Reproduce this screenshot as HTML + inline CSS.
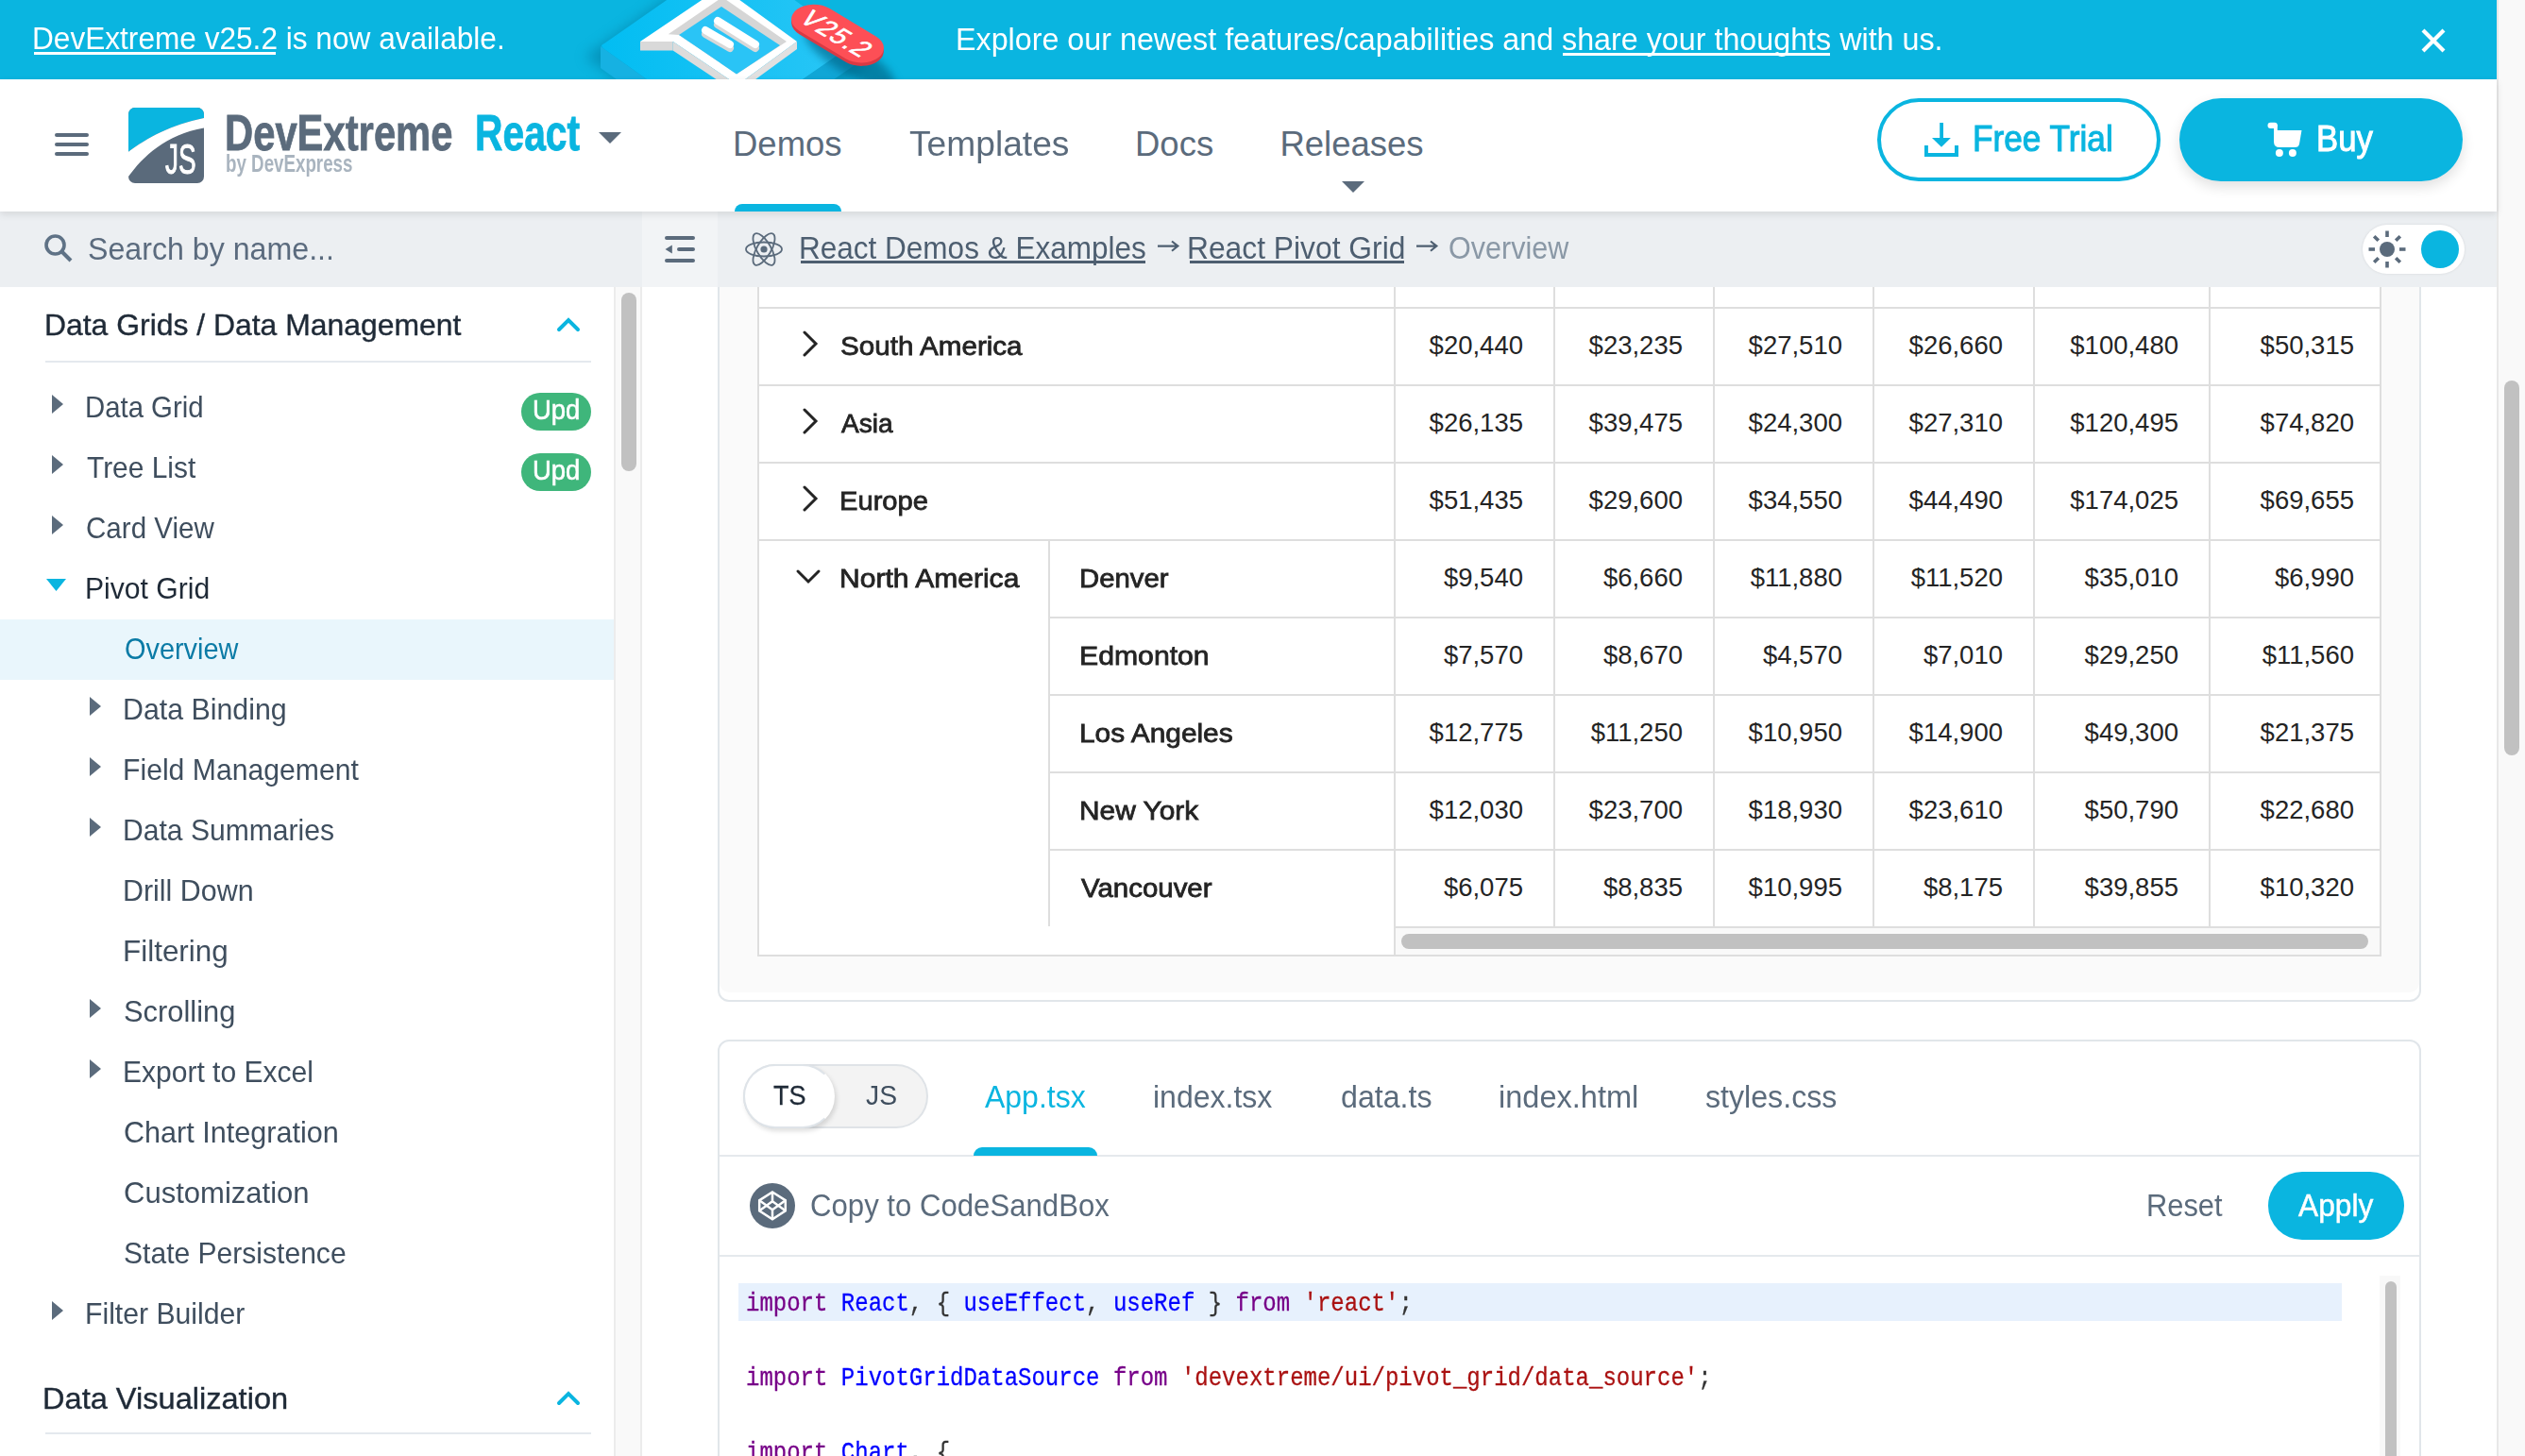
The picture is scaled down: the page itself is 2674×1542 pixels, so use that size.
<!DOCTYPE html>
<html><head><meta charset="utf-8"><title>DevExtreme React Pivot Grid</title>
<style>
html,body{margin:0;padding:0;width:2674px;height:1542px;overflow:hidden;background:#fff;}
.r{position:absolute;}
.t{position:absolute;white-space:pre;transform-origin:0 0;}
</style></head><body>
<div class=r style="left:0px;top:0px;width:2644px;height:84px;background:#0ab5e0;"></div>
<div class=t style="left:34.08px;top:20.72px;font-family:'Liberation Sans', sans-serif;font-size:32.5px;line-height:40.62px;font-weight:400;color:#fff;transform:scale(0.9725,1.0);">DevExtreme v25.2 is now available.</div>
<div class=r style="left:36px;top:55px;width:256px;height:3px;background:#fff;"></div>
<div class=t style="left:1011.72px;top:21.92px;font-family:'Liberation Sans', sans-serif;font-size:32.5px;line-height:40.62px;font-weight:400;color:#fff;transform:scale(0.9927,1.0);">Explore our newest features/capabilities and share your thoughts with us.</div>
<div class=r style="left:1655px;top:56px;width:283px;height:3px;background:#fff;"></div>
<svg class=r style="left:2560px;top:26px" width="34" height="34" viewBox="0 0 34 34"><path d="M6 6L28 28M28 6L6 28" stroke="#fff" stroke-width="4.2"/></svg>
<svg class=r style="left:600px;top:0px" width="400" height="84" viewBox="0 0 400 84">
<defs>
<linearGradient id="pg" x1="0" y1="0" x2="1" y2="0"><stop offset="0" stop-color="#02bdf2"/><stop offset="1" stop-color="#2ac6f6"/></linearGradient>
<filter id="bl" x="-50%" y="-50%" width="200%" height="200%"><feGaussianBlur stdDeviation="7"/></filter>
<filter id="bl2" x="-50%" y="-50%" width="200%" height="200%"><feGaussianBlur stdDeviation="4"/></filter>
</defs>
<path d="M20 60 L160 -40 L320 70 L170 170 Z" fill="#06779c" opacity="0.55" filter="url(#bl)"/>
<path d="M36 49 L166 142 L166 165 L36 72 Z" fill="#16b1e2"/>
<path d="M305 46 L305 69 L166 165 L166 142 Z" fill="#10a6d6"/>
<path d="M40 46 L175 -48 L305 46 L166 142 L40 52 Q34 48 40 46 Z" fill="url(#pg)"/>
<path d="M78 44 L164 -14 L244 44 L181 90 L112.7 44 Z" fill="#fff"/>
<path d="M78 44 L112.7 44 L112.7 53.5 L78 53.5 Z" fill="#d9d9d9"/>
<path d="M112.7 44 L181 90 L181 99 L112.7 53.5 Z" fill="#dcdcdc"/>
<path d="M244 44 L244 52 L181 98 L181 90 Z" fill="#e0e0e0"/>
<path d="M107.7 36.3 L165 -3 L233 44 L180 78.4 L119 37 Z" fill="#d6d6d6"/>
<path d="M119 37 L164 7 L226 48 L180 78.4 Z" fill="#2ac4f6"/>
<g stroke-linecap="round"><path d="M147 36 L173 51" stroke="#d8d8d8" stroke-width="8"/><path d="M147 32 L173 47" stroke="#fff" stroke-width="8"/>
<path d="M160 26 L200 51" stroke="#d8d8d8" stroke-width="8"/><path d="M160 22 L200 47" stroke="#fff" stroke-width="8"/></g>
<ellipse cx="300" cy="62" rx="55" ry="16" transform="rotate(31 300 62)" fill="#045f80" opacity="0.6" filter="url(#bl2)"/>
<g transform="matrix(0.857,0.515,-0.75,0.55,287,39)"><rect x="-50" y="-21.5" width="100" height="43" rx="21.5" fill="#d93a44"/></g>
<g transform="matrix(0.857,0.515,-0.75,0.55,287,35.6)"><rect x="-50" y="-21.5" width="100" height="43" rx="21.5" fill="#fd4f56"/>
<text x="0" y="10" text-anchor="middle" font-family="Liberation Sans" font-size="27" fill="#fff" stroke="#fff" stroke-width="0.6" letter-spacing="1.5" transform="scale(1,1.15)">V25.2</text></g>
</svg>
<div class=r style="left:0px;top:84px;width:2644px;height:140px;background:#fff;box-shadow:0 3px 8px rgba(0,0,0,0.10);z-index:2"></div>
<div class=r style="left:58px;top:141px;width:36px;height:4px;background:#5b6b7c;border-radius:2px;z-index:3"></div>
<div class=r style="left:58px;top:151px;width:36px;height:4px;background:#5b6b7c;border-radius:2px;z-index:3"></div>
<div class=r style="left:58px;top:161px;width:36px;height:4px;background:#5b6b7c;border-radius:2px;z-index:3"></div>
<svg class=r style="left:136px;top:114px;z-index:3" width="80" height="80" viewBox="0 0 80 80">
<defs><clipPath id="lc"><rect width="80" height="80" rx="7"/></clipPath></defs>
<g clip-path="url(#lc)"><rect width="80" height="80" fill="#5a6a7b"/>
<path d="M0 0H80V11 C45 18 20 32 0 46.7Z" fill="#0ab5e0"/>
<path d="M0 46.7 C20 32 45 18 80 11 V21.4 C40 28 15 52 0 73Z" fill="#fff"/></g>
</svg>

<div class=t style="left:174.88px;top:140.77px;font-family:'Liberation Sans', sans-serif;font-size:45px;line-height:56.25px;font-weight:400;color:#fff;transform:scale(0.6200,1.0);z-index:4;-webkit-text-stroke:1px #fff">JS</div>
<div class=t style="left:237.64px;top:107.50px;font-family:'Liberation Sans', sans-serif;font-size:53px;line-height:66.25px;font-weight:700;color:#5b6b7c;transform:scale(0.7881,1.0);z-index:3;-webkit-text-stroke:0.8px #5b6b7c">DevExtreme</div>
<div class=t style="left:238.50px;top:157.71px;font-family:'Liberation Sans', sans-serif;font-size:25px;line-height:31.25px;font-weight:700;color:#a9b4bf;transform:scale(0.7500,1.0);z-index:3">by DevExpress</div>
<div class=t style="left:502.69px;top:108.20px;font-family:'Liberation Sans', sans-serif;font-size:53px;line-height:66.25px;font-weight:700;color:#0ab5e0;transform:scale(0.7695,1.0);z-index:3;-webkit-text-stroke:0.8px #0ab5e0">React</div>
<svg class=r style="left:634px;top:140px;z-index:3" width="24" height="12"><path d="M0 0H24L12 12Z" fill="#5b6b7c"/></svg>
<div class=t style="left:776.00px;top:130.34px;font-family:'Liberation Sans', sans-serif;font-size:36.5px;line-height:45.62px;font-weight:400;color:#5b6b7c;z-index:3">Demos</div>
<div class=t style="left:962.98px;top:130.34px;font-family:'Liberation Sans', sans-serif;font-size:36.5px;line-height:45.62px;font-weight:400;color:#5b6b7c;transform:scale(1.0183,1.0);z-index:3">Templates</div>
<div class=t style="left:1202.00px;top:130.34px;font-family:'Liberation Sans', sans-serif;font-size:36.5px;line-height:45.62px;font-weight:400;color:#5b6b7c;z-index:3">Docs</div>
<div class=t style="left:1355.41px;top:130.34px;font-family:'Liberation Sans', sans-serif;font-size:36.5px;line-height:45.62px;font-weight:400;color:#5b6b7c;z-index:3">Releases</div>
<div class=r style="left:778px;top:216px;width:113px;height:8px;background:#0ab5e0;border-radius:8px 8px 0 0;z-index:3"></div>
<svg class=r style="left:1421px;top:192px;z-index:3" width="24" height="12"><path d="M0 0H24L12 12Z" fill="#5b6b7c"/></svg>
<div class=r style="left:1988px;top:104px;width:300px;height:88px;background:#fff;box-sizing:border-box;border:4px solid #0ab5e0;border-radius:44px;z-index:3"></div>
<svg class=r style="left:2038px;top:130px;z-index:4" width="36" height="36" viewBox="0 0 36 36"><g fill="#0ab5e0"><rect x="16.2" y="0" width="3.8" height="16.5"/><path d="M8 16H27.9L18 25.8Z"/><rect x="0" y="24" width="3.9" height="12"/><rect x="0" y="32" width="36" height="4"/><rect x="32" y="24" width="4" height="12"/></g></svg>
<div class=t style="left:2089.26px;top:123.29px;font-family:'Liberation Sans', sans-serif;font-size:38.5px;line-height:48.12px;font-weight:400;color:#0ab5e0;transform:scale(0.9146,1.0);z-index:4;-webkit-text-stroke:1px #0ab5e0">Free Trial</div>
<div class=r style="left:2308px;top:104px;width:300px;height:88px;background:#0ab5e0;border-radius:44px;box-shadow:0 6px 14px rgba(0,0,0,0.12);z-index:3"></div>
<svg class=r style="left:2400px;top:128px;z-index:4" width="40" height="40" viewBox="0 0 40 40"><g fill="#fff"><rect x="1.5" y="1.8" width="10.3" height="6.2" rx="3"/><rect x="8" y="4" width="3.8" height="12"/><path d="M8 10.1H37.5L35 24.5Q34.3 28 30.5 28H14Q8 28 8 22Z"/><circle cx="13.9" cy="33.9" r="4"/><circle cx="27.9" cy="33.9" r="4"/></g></svg>
<div class=t style="left:2453.30px;top:123.29px;font-family:'Liberation Sans', sans-serif;font-size:38.5px;line-height:48.12px;font-weight:400;color:#fff;transform:scale(0.9016,1.0);z-index:4;-webkit-text-stroke:1px #fff">Buy</div>
<div class=r style="left:0px;top:224px;width:2644px;height:80px;background:#eceff2;z-index:1"></div>
<div class=r style="left:680px;top:224px;width:80px;height:80px;background:#f2f4f6;z-index:1"></div>
<svg class=r style="left:46px;top:247px;z-index:2" width="32" height="32" viewBox="0 0 32 32"><circle cx="12.5" cy="12.5" r="9.5" stroke="#5f7286" stroke-width="3.6" fill="none"/><path d="M19.5 19.5L29 29" stroke="#5f7286" stroke-width="4"/></svg>
<div class=t style="left:92.75px;top:242.63px;font-family:'Liberation Sans', sans-serif;font-size:33px;line-height:41.25px;font-weight:400;color:#5b6b7e;transform:scale(0.9745,1.0);z-index:2">Search by name...</div>
<svg class=r style="left:700px;top:246px;z-index:2" width="40" height="36" viewBox="0 0 40 36"><path d="M6 6H34M19 18H34M6 30H34" stroke="#5b6b7c" stroke-width="4" stroke-linecap="round"/><path d="M4.5 18L11.8 13.5V22.5Z" fill="#5b6b7c"/></svg>
<svg class=r style="left:788px;top:244px;z-index:2" width="42" height="40" viewBox="-21 -20 42 40"><g fill="none" stroke="#5b6b7c" stroke-width="1.8"><ellipse rx="19" ry="7.5"/><ellipse rx="19" ry="7.5" transform="rotate(60)"/><ellipse rx="19" ry="7.5" transform="rotate(120)"/></g><circle r="3.6" fill="#5b6b7c"/></svg>
<div class=t style="left:845.54px;top:241.93px;font-family:'Liberation Sans', sans-serif;font-size:33px;line-height:41.25px;font-weight:400;color:#4d5e70;transform:scale(0.9549,1.0);z-index:2">React Demos &amp; Examples</div>
<div class=r style="left:848px;top:276px;width:365px;height:3px;background:#4d5e70;z-index:2"></div>
<svg class=r style="left:1224px;top:252px;z-index:2" width="26" height="18" viewBox="0 0 26 18"><path d="M2 8.6H23M17 3.5L23.4 8.6L17 13.8" stroke="#4d5e70" stroke-width="2.1" fill="none"/></svg>
<div class=t style="left:1257.11px;top:241.93px;font-family:'Liberation Sans', sans-serif;font-size:33px;line-height:41.25px;font-weight:400;color:#4d5e70;transform:scale(0.9630,1.0);z-index:2">React Pivot Grid</div>
<div class=r style="left:1260px;top:276px;width:227px;height:3px;background:#4d5e70;z-index:2"></div>
<svg class=r style="left:1498px;top:252px;z-index:2" width="26" height="18" viewBox="0 0 26 18"><path d="M2 8.6H23M17 3.5L23.4 8.6L17 13.8" stroke="#4d5e70" stroke-width="2.1" fill="none"/></svg>
<div class=t style="left:1533.78px;top:241.93px;font-family:'Liberation Sans', sans-serif;font-size:33px;line-height:41.25px;font-weight:400;color:#8a98a6;transform:scale(0.9248,1.0);z-index:2">Overview</div>
<div class=r style="left:2502px;top:238px;width:108px;height:52px;background:#fff;border-radius:26px;z-index:2;box-shadow:0 0 3px rgba(0,0,0,0.10)"></div>
<svg class=r style="left:2506px;top:242px;z-index:3" width="44" height="44" viewBox="-22 -22 44 44"><circle r="8" fill="#5b6b7c"/><path d="M13.0 0.0L19.5 0.0" stroke="#5b6b7c" stroke-width="3.6"/><path d="M9.2 9.2L13.8 13.8" stroke="#5b6b7c" stroke-width="3.6"/><path d="M0.0 13.0L0.0 19.5" stroke="#5b6b7c" stroke-width="3.6"/><path d="M-9.2 9.2L-13.8 13.8" stroke="#5b6b7c" stroke-width="3.6"/><path d="M-13.0 0.0L-19.5 0.0" stroke="#5b6b7c" stroke-width="3.6"/><path d="M-9.2 -9.2L-13.8 -13.8" stroke="#5b6b7c" stroke-width="3.6"/><path d="M-0.0 -13.0L-0.0 -19.5" stroke="#5b6b7c" stroke-width="3.6"/><path d="M9.2 -9.2L13.8 -13.8" stroke="#5b6b7c" stroke-width="3.6"/></svg>
<div class=r style="left:2564px;top:244px;width:40px;height:40px;background:#0ab5e0;border-radius:50%;z-index:3"></div>
<div class=r style="left:0px;top:304px;width:650px;height:1238px;background:#fff;"></div>
<div class=r style="left:650px;top:304px;width:30px;height:1238px;background:#f9f9f9;box-sizing:border-box;border-left:2px solid #ececec;border-right:2px solid #ececec"></div>
<div class=r style="left:658px;top:310px;width:16px;height:189px;background:#c1c1c1;border-radius:8px"></div>
<div class=t style="left:46.61px;top:323.91px;font-family:'Liberation Sans', sans-serif;font-size:32px;line-height:40.0px;font-weight:400;color:#1f2a37;transform:scale(0.9964,1.0);-webkit-text-stroke:0.4px #1f2a37">Data Grids / Data Management</div>
<svg class=r style="left:588px;top:335px" width="28" height="18" viewBox="0 0 28 18"><path d="M4 14L14 4L24 14" stroke="#0ab5e0" stroke-width="4" fill="none" stroke-linecap="round"/></svg>
<div class=r style="left:48px;top:382px;width:578px;height:2px;background:#e4e9ee;"></div>
<div class=r style="left:0px;top:656px;width:650px;height:64px;background:#e9f6fc;"></div>
<div class=t style="left:90.25px;top:410.91px;font-family:'Liberation Sans', sans-serif;font-size:32px;line-height:40.0px;font-weight:400;color:#3f4e5e;transform:scale(0.9167,1.0);">Data Grid</div>
<svg class=r style="left:54px;top:418px" width="14" height="20"><path d="M1 0L13 10L1 20Z" fill="#5b6b7c"/></svg>
<div class=r style="left:552px;top:416px;width:74px;height:40px;background:#3fb67b;border-radius:20px"></div>
<div class=t style="left:564.14px;top:416.33px;font-family:'Liberation Sans', sans-serif;font-size:29.5px;line-height:36.88px;font-weight:400;color:#fff;transform:scale(0.9300,1.0);-webkit-text-stroke:0.6px #fff">Upd</div>
<div class=t style="left:92.07px;top:474.91px;font-family:'Liberation Sans', sans-serif;font-size:32px;line-height:40.0px;font-weight:400;color:#3f4e5e;transform:scale(0.9344,1.0);">Tree List</div>
<svg class=r style="left:54px;top:482px" width="14" height="20"><path d="M1 0L13 10L1 20Z" fill="#5b6b7c"/></svg>
<div class=r style="left:552px;top:480px;width:74px;height:40px;background:#3fb67b;border-radius:20px"></div>
<div class=t style="left:564.14px;top:480.33px;font-family:'Liberation Sans', sans-serif;font-size:29.5px;line-height:36.88px;font-weight:400;color:#fff;transform:scale(0.9300,1.0);-webkit-text-stroke:0.6px #fff">Upd</div>
<div class=t style="left:91.15px;top:538.91px;font-family:'Liberation Sans', sans-serif;font-size:32px;line-height:40.0px;font-weight:400;color:#3f4e5e;transform:scale(0.9241,1.0);">Card View</div>
<svg class=r style="left:54px;top:546px" width="14" height="20"><path d="M1 0L13 10L1 20Z" fill="#5b6b7c"/></svg>
<div class=t style="left:90.18px;top:602.91px;font-family:'Liberation Sans', sans-serif;font-size:32px;line-height:40.0px;font-weight:400;color:#1f2a37;transform:scale(0.9412,1.0);">Pivot Grid</div>
<svg class=r style="left:49px;top:613px" width="22" height="14"><path d="M0 0H21L10.5 13Z" fill="#0ab5e0"/></svg>
<div class=t style="left:131.60px;top:666.91px;font-family:'Liberation Sans', sans-serif;font-size:32px;line-height:40.0px;font-weight:400;color:#0b7ba6;transform:scale(0.9023,1.0);">Overview</div>
<div class=t style="left:129.66px;top:730.91px;font-family:'Liberation Sans', sans-serif;font-size:32px;line-height:40.0px;font-weight:400;color:#3f4e5e;transform:scale(0.9478,1.0);">Data Binding</div>
<svg class=r style="left:93.5px;top:738px" width="14" height="20"><path d="M1 0L13 10L1 20Z" fill="#5b6b7c"/></svg>
<div class=t style="left:129.67px;top:794.91px;font-family:'Liberation Sans', sans-serif;font-size:32px;line-height:40.0px;font-weight:400;color:#3f4e5e;transform:scale(0.9427,1.0);">Field Management</div>
<svg class=r style="left:93.5px;top:802px" width="14" height="20"><path d="M1 0L13 10L1 20Z" fill="#5b6b7c"/></svg>
<div class=t style="left:129.68px;top:858.91px;font-family:'Liberation Sans', sans-serif;font-size:32px;line-height:40.0px;font-weight:400;color:#3f4e5e;transform:scale(0.9402,1.0);">Data Summaries</div>
<svg class=r style="left:93.5px;top:866px" width="14" height="20"><path d="M1 0L13 10L1 20Z" fill="#5b6b7c"/></svg>
<div class=t style="left:129.65px;top:922.91px;font-family:'Liberation Sans', sans-serif;font-size:32px;line-height:40.0px;font-weight:400;color:#3f4e5e;transform:scale(0.9504,1.0);">Drill Down</div>
<div class=t style="left:129.56px;top:986.91px;font-family:'Liberation Sans', sans-serif;font-size:32px;line-height:40.0px;font-weight:400;color:#3f4e5e;transform:scale(0.9817,1.0);">Filtering</div>
<div class=t style="left:130.57px;top:1050.91px;font-family:'Liberation Sans', sans-serif;font-size:32px;line-height:40.0px;font-weight:400;color:#3f4e5e;transform:scale(0.9639,1.0);">Scrolling</div>
<svg class=r style="left:93.5px;top:1058px" width="14" height="20"><path d="M1 0L13 10L1 20Z" fill="#5b6b7c"/></svg>
<div class=t style="left:129.69px;top:1114.91px;font-family:'Liberation Sans', sans-serif;font-size:32px;line-height:40.0px;font-weight:400;color:#3f4e5e;transform:scale(0.9381,1.0);">Export to Excel</div>
<svg class=r style="left:93.5px;top:1122px" width="14" height="20"><path d="M1 0L13 10L1 20Z" fill="#5b6b7c"/></svg>
<div class=t style="left:130.59px;top:1178.91px;font-family:'Liberation Sans', sans-serif;font-size:32px;line-height:40.0px;font-weight:400;color:#3f4e5e;transform:scale(0.9560,1.0);">Chart Integration</div>
<div class=t style="left:130.56px;top:1242.91px;font-family:'Liberation Sans', sans-serif;font-size:32px;line-height:40.0px;font-weight:400;color:#3f4e5e;transform:scale(0.9698,1.0);">Customization</div>
<div class=t style="left:130.62px;top:1306.91px;font-family:'Liberation Sans', sans-serif;font-size:32px;line-height:40.0px;font-weight:400;color:#3f4e5e;transform:scale(0.9395,1.0);">State Persistence</div>
<div class=t style="left:90.17px;top:1370.91px;font-family:'Liberation Sans', sans-serif;font-size:32px;line-height:40.0px;font-weight:400;color:#3f4e5e;transform:scale(0.9432,1.0);">Filter Builder</div>
<svg class=r style="left:54px;top:1378px" width="14" height="20"><path d="M1 0L13 10L1 20Z" fill="#5b6b7c"/></svg>
<div class=t style="left:45.45px;top:1460.61px;font-family:'Liberation Sans', sans-serif;font-size:32px;line-height:40.0px;font-weight:400;color:#1f2a37;transform:scale(1.0179,1.0);-webkit-text-stroke:0.4px #1f2a37">Data Visualization</div>
<svg class=r style="left:588px;top:1472px" width="28" height="18" viewBox="0 0 28 18"><path d="M4 14L14 4L24 14" stroke="#0ab5e0" stroke-width="4" fill="none" stroke-linecap="round"/></svg>
<div class=r style="left:48px;top:1517px;width:578px;height:2px;background:#e4e9ee;"></div>
<div class=r style="left:680px;top:304px;width:1964px;height:1238px;background:#fff;"></div>
<div class=r style="left:760px;top:100px;width:1804px;height:961px;background:#fff;box-sizing:border-box;border:2px solid #e1e6ea;border-radius:12px"></div>
<div class=r style="left:762px;top:100px;width:1800px;height:951px;background:#fafafa;border-radius:0 0 10px 10px"></div>
<div class=r style="left:802px;top:100px;width:1720px;height:913px;background:#fff;box-sizing:border-box;border:2px solid #dedede"></div>
<div class=r style="left:803px;top:325px;width:1718px;height:2px;background:#dedede;"></div>
<div class=r style="left:803px;top:407px;width:1718px;height:2px;background:#dedede;"></div>
<div class=r style="left:803px;top:488.5px;width:1718px;height:2.0px;background:#dedede;"></div>
<div class=r style="left:803px;top:571px;width:1718px;height:2px;background:#dedede;"></div>
<div class=r style="left:1111px;top:652.7px;width:1410px;height:2.0px;background:#dedede;"></div>
<div class=r style="left:1111px;top:734.5px;width:1410px;height:2.0px;background:#dedede;"></div>
<div class=r style="left:1111px;top:817px;width:1410px;height:2px;background:#dedede;"></div>
<div class=r style="left:1111px;top:898.7px;width:1410px;height:2.0px;background:#dedede;"></div>
<div class=r style="left:1477px;top:981px;width:1044px;height:2px;background:#dedede;"></div>
<div class=r style="left:1476px;top:100px;width:2px;height:912px;background:#dedede;"></div>
<div class=r style="left:1110px;top:572px;width:2px;height:409px;background:#dedede;"></div>
<div class=r style="left:1645px;top:100px;width:2px;height:881px;background:#dedede;"></div>
<div class=r style="left:1814px;top:100px;width:2px;height:881px;background:#dedede;"></div>
<div class=r style="left:1983px;top:100px;width:2px;height:881px;background:#dedede;"></div>
<div class=r style="left:2153px;top:100px;width:2px;height:881px;background:#dedede;"></div>
<div class=r style="left:2339px;top:100px;width:2px;height:881px;background:#dedede;"></div>
<div class=r style="left:1478px;top:983px;width:1042px;height:28px;background:#f9f9f9;"></div>
<div class=r style="left:1484px;top:989px;width:1024px;height:16px;background:#c1c1c1;border-radius:8px"></div>
<div class=t style="left:890.26px;top:349.31px;font-family:'Liberation Sans', sans-serif;font-size:28.5px;line-height:35.62px;font-weight:400;color:#242424;transform:scale(1.0391,1.0);-webkit-text-stroke:0.8px #242424;">South America</div>
<svg class=r style="left:849px;top:350.0px" width="18" height="28" viewBox="0 0 18 28"><path d="M3 2L15 14L3 26" stroke="#242424" stroke-width="3" fill="none" stroke-linecap="round"/></svg>
<div class=t style="right:1061px;top:348.47px;font-family:'Liberation Sans',sans-serif;font-size:27.5px;line-height:35px;color:#242424">$20,440</div>
<div class=t style="right:892px;top:348.47px;font-family:'Liberation Sans',sans-serif;font-size:27.5px;line-height:35px;color:#242424">$23,235</div>
<div class=t style="right:723px;top:348.47px;font-family:'Liberation Sans',sans-serif;font-size:27.5px;line-height:35px;color:#242424">$27,510</div>
<div class=t style="right:553px;top:348.47px;font-family:'Liberation Sans',sans-serif;font-size:27.5px;line-height:35px;color:#242424">$26,660</div>
<div class=t style="right:367px;top:348.47px;font-family:'Liberation Sans',sans-serif;font-size:27.5px;line-height:35px;color:#242424">$100,480</div>
<div class=t style="right:181px;top:348.47px;font-family:'Liberation Sans',sans-serif;font-size:27.5px;line-height:35px;color:#242424">$50,315</div>
<div class=t style="left:891.30px;top:431.06px;font-family:'Liberation Sans', sans-serif;font-size:28.5px;line-height:35.62px;font-weight:400;color:#242424;transform:scale(0.9855,1.0);-webkit-text-stroke:0.8px #242424;">Asia</div>
<svg class=r style="left:849px;top:431.75px" width="18" height="28" viewBox="0 0 18 28"><path d="M3 2L15 14L3 26" stroke="#242424" stroke-width="3" fill="none" stroke-linecap="round"/></svg>
<div class=t style="right:1061px;top:430.22px;font-family:'Liberation Sans',sans-serif;font-size:27.5px;line-height:35px;color:#242424">$26,135</div>
<div class=t style="right:892px;top:430.22px;font-family:'Liberation Sans',sans-serif;font-size:27.5px;line-height:35px;color:#242424">$39,475</div>
<div class=t style="right:723px;top:430.22px;font-family:'Liberation Sans',sans-serif;font-size:27.5px;line-height:35px;color:#242424">$24,300</div>
<div class=t style="right:553px;top:430.22px;font-family:'Liberation Sans',sans-serif;font-size:27.5px;line-height:35px;color:#242424">$27,310</div>
<div class=t style="right:367px;top:430.22px;font-family:'Liberation Sans',sans-serif;font-size:27.5px;line-height:35px;color:#242424">$120,495</div>
<div class=t style="right:181px;top:430.22px;font-family:'Liberation Sans',sans-serif;font-size:27.5px;line-height:35px;color:#242424">$74,820</div>
<div class=t style="left:889.26px;top:513.06px;font-family:'Liberation Sans', sans-serif;font-size:28.5px;line-height:35.62px;font-weight:400;color:#242424;transform:scale(1.0225,1.0);-webkit-text-stroke:0.8px #242424;">Europe</div>
<svg class=r style="left:849px;top:513.75px" width="18" height="28" viewBox="0 0 18 28"><path d="M3 2L15 14L3 26" stroke="#242424" stroke-width="3" fill="none" stroke-linecap="round"/></svg>
<div class=t style="right:1061px;top:512.22px;font-family:'Liberation Sans',sans-serif;font-size:27.5px;line-height:35px;color:#242424">$51,435</div>
<div class=t style="right:892px;top:512.22px;font-family:'Liberation Sans',sans-serif;font-size:27.5px;line-height:35px;color:#242424">$29,600</div>
<div class=t style="right:723px;top:512.22px;font-family:'Liberation Sans',sans-serif;font-size:27.5px;line-height:35px;color:#242424">$34,550</div>
<div class=t style="right:553px;top:512.22px;font-family:'Liberation Sans',sans-serif;font-size:27.5px;line-height:35px;color:#242424">$44,490</div>
<div class=t style="right:367px;top:512.22px;font-family:'Liberation Sans',sans-serif;font-size:27.5px;line-height:35px;color:#242424">$174,025</div>
<div class=t style="right:181px;top:512.22px;font-family:'Liberation Sans',sans-serif;font-size:27.5px;line-height:35px;color:#242424">$69,655</div>
<div class=t style="left:889.19px;top:595.16px;font-family:'Liberation Sans', sans-serif;font-size:28.5px;line-height:35.62px;font-weight:400;color:#242424;transform:scale(1.0542,1.0);-webkit-text-stroke:0.8px #242424;">North America</div>
<svg class=r style="left:842px;top:602px" width="28" height="18" viewBox="0 0 28 18"><path d="M3 3L14 14L25 3" stroke="#242424" stroke-width="3" fill="none" stroke-linecap="round"/></svg>
<div class=t style="left:1142.64px;top:595.16px;font-family:'Liberation Sans', sans-serif;font-size:28.5px;line-height:35.62px;font-weight:400;color:#242424;transform:scale(1.0289,1.0);-webkit-text-stroke:0.8px #242424;">Denver</div>
<div class=t style="right:1061px;top:594.32px;font-family:'Liberation Sans',sans-serif;font-size:27.5px;line-height:35px;color:#242424">$9,540</div>
<div class=t style="right:892px;top:594.32px;font-family:'Liberation Sans',sans-serif;font-size:27.5px;line-height:35px;color:#242424">$6,660</div>
<div class=t style="right:723px;top:594.32px;font-family:'Liberation Sans',sans-serif;font-size:27.5px;line-height:35px;color:#242424">$11,880</div>
<div class=t style="right:553px;top:594.32px;font-family:'Liberation Sans',sans-serif;font-size:27.5px;line-height:35px;color:#242424">$11,520</div>
<div class=t style="right:367px;top:594.32px;font-family:'Liberation Sans',sans-serif;font-size:27.5px;line-height:35px;color:#242424">$35,010</div>
<div class=t style="right:181px;top:594.32px;font-family:'Liberation Sans',sans-serif;font-size:27.5px;line-height:35px;color:#242424">$6,990</div>
<div class=t style="left:1142.58px;top:676.91px;font-family:'Liberation Sans', sans-serif;font-size:28.5px;line-height:35.62px;font-weight:400;color:#242424;transform:scale(1.0595,1.0);-webkit-text-stroke:0.8px #242424;">Edmonton</div>
<div class=t style="right:1061px;top:676.07px;font-family:'Liberation Sans',sans-serif;font-size:27.5px;line-height:35px;color:#242424">$7,570</div>
<div class=t style="right:892px;top:676.07px;font-family:'Liberation Sans',sans-serif;font-size:27.5px;line-height:35px;color:#242424">$8,670</div>
<div class=t style="right:723px;top:676.07px;font-family:'Liberation Sans',sans-serif;font-size:27.5px;line-height:35px;color:#242424">$4,570</div>
<div class=t style="right:553px;top:676.07px;font-family:'Liberation Sans',sans-serif;font-size:27.5px;line-height:35px;color:#242424">$7,010</div>
<div class=t style="right:367px;top:676.07px;font-family:'Liberation Sans',sans-serif;font-size:27.5px;line-height:35px;color:#242424">$29,250</div>
<div class=t style="right:181px;top:676.07px;font-family:'Liberation Sans',sans-serif;font-size:27.5px;line-height:35px;color:#242424">$11,560</div>
<div class=t style="left:1142.61px;top:759.06px;font-family:'Liberation Sans', sans-serif;font-size:28.5px;line-height:35.62px;font-weight:400;color:#242424;transform:scale(1.0474,1.0);-webkit-text-stroke:0.8px #242424;">Los Angeles</div>
<div class=t style="right:1061px;top:758.22px;font-family:'Liberation Sans',sans-serif;font-size:27.5px;line-height:35px;color:#242424">$12,775</div>
<div class=t style="right:892px;top:758.22px;font-family:'Liberation Sans',sans-serif;font-size:27.5px;line-height:35px;color:#242424">$11,250</div>
<div class=t style="right:723px;top:758.22px;font-family:'Liberation Sans',sans-serif;font-size:27.5px;line-height:35px;color:#242424">$10,950</div>
<div class=t style="right:553px;top:758.22px;font-family:'Liberation Sans',sans-serif;font-size:27.5px;line-height:35px;color:#242424">$14,900</div>
<div class=t style="right:367px;top:758.22px;font-family:'Liberation Sans',sans-serif;font-size:27.5px;line-height:35px;color:#242424">$49,300</div>
<div class=t style="right:181px;top:758.22px;font-family:'Liberation Sans',sans-serif;font-size:27.5px;line-height:35px;color:#242424">$21,375</div>
<div class=t style="left:1142.61px;top:841.16px;font-family:'Liberation Sans', sans-serif;font-size:28.5px;line-height:35.62px;font-weight:400;color:#242424;transform:scale(1.0475,1.0);-webkit-text-stroke:0.8px #242424;">New York</div>
<div class=t style="right:1061px;top:840.32px;font-family:'Liberation Sans',sans-serif;font-size:27.5px;line-height:35px;color:#242424">$12,030</div>
<div class=t style="right:892px;top:840.32px;font-family:'Liberation Sans',sans-serif;font-size:27.5px;line-height:35px;color:#242424">$23,700</div>
<div class=t style="right:723px;top:840.32px;font-family:'Liberation Sans',sans-serif;font-size:27.5px;line-height:35px;color:#242424">$18,930</div>
<div class=t style="right:553px;top:840.32px;font-family:'Liberation Sans',sans-serif;font-size:27.5px;line-height:35px;color:#242424">$23,610</div>
<div class=t style="right:367px;top:840.32px;font-family:'Liberation Sans',sans-serif;font-size:27.5px;line-height:35px;color:#242424">$50,790</div>
<div class=t style="right:181px;top:840.32px;font-family:'Liberation Sans',sans-serif;font-size:27.5px;line-height:35px;color:#242424">$22,680</div>
<div class=t style="left:1144.70px;top:922.91px;font-family:'Liberation Sans', sans-serif;font-size:28.5px;line-height:35.62px;font-weight:400;color:#242424;transform:scale(1.0328,1.0);-webkit-text-stroke:0.8px #242424;">Vancouver</div>
<div class=t style="right:1061px;top:922.07px;font-family:'Liberation Sans',sans-serif;font-size:27.5px;line-height:35px;color:#242424">$6,075</div>
<div class=t style="right:892px;top:922.07px;font-family:'Liberation Sans',sans-serif;font-size:27.5px;line-height:35px;color:#242424">$8,835</div>
<div class=t style="right:723px;top:922.07px;font-family:'Liberation Sans',sans-serif;font-size:27.5px;line-height:35px;color:#242424">$10,995</div>
<div class=t style="right:553px;top:922.07px;font-family:'Liberation Sans',sans-serif;font-size:27.5px;line-height:35px;color:#242424">$8,175</div>
<div class=t style="right:367px;top:922.07px;font-family:'Liberation Sans',sans-serif;font-size:27.5px;line-height:35px;color:#242424">$39,855</div>
<div class=t style="right:181px;top:922.07px;font-family:'Liberation Sans',sans-serif;font-size:27.5px;line-height:35px;color:#242424">$10,320</div>
<div class=r style="left:760px;top:1101px;width:1804px;height:599px;background:#fff;box-sizing:border-box;border:2px solid #e1e6ea;border-radius:12px"></div>
<div class=r style="left:787px;top:1127px;width:196px;height:68px;background:#f3f3f3;box-sizing:border-box;border:2px solid #dfe3e7;border-radius:34px"></div>
<div class=r style="left:787px;top:1127px;width:97px;height:68px;background:#fff;box-sizing:border-box;border:2px solid #dfe4e9;border-right-color:transparent;border-radius:34px;box-shadow:2px 3px 5px rgba(0,0,0,0.13)"></div>
<div class=t style="left:819.10px;top:1141.05px;font-family:'Liberation Sans', sans-serif;font-size:30px;line-height:37.5px;font-weight:400;color:#1f2a37;transform:scale(0.9028,1.0);-webkit-text-stroke:0.3px #1f2a37">TS</div>
<div class=t style="left:916.76px;top:1141.05px;font-family:'Liberation Sans', sans-serif;font-size:30px;line-height:37.5px;font-weight:400;color:#3f4e5e;transform:scale(0.9424,1.0);">JS</div>
<div class=t style="left:1043.00px;top:1141.43px;font-family:'Liberation Sans', sans-serif;font-size:33px;line-height:41.25px;font-weight:400;color:#0ab5e0;transform:scale(0.9691,1.0);">App.tsx</div>
<div class=t style="left:1221.46px;top:1141.43px;font-family:'Liberation Sans', sans-serif;font-size:33px;line-height:41.25px;font-weight:400;color:#5b6b7c;transform:scale(0.9703,1.0);">index.tsx</div>
<div class=t style="left:1419.63px;top:1141.43px;font-family:'Liberation Sans', sans-serif;font-size:33px;line-height:41.25px;font-weight:400;color:#5b6b7c;transform:scale(0.9742,1.0);">data.ts</div>
<div class=t style="left:1587.03px;top:1141.43px;font-family:'Liberation Sans', sans-serif;font-size:33px;line-height:41.25px;font-weight:400;color:#5b6b7c;transform:scale(0.9856,1.0);">index.html</div>
<div class=t style="left:1805.63px;top:1141.43px;font-family:'Liberation Sans', sans-serif;font-size:33px;line-height:41.25px;font-weight:400;color:#5b6b7c;transform:scale(0.9745,1.0);">styles.css</div>
<div class=r style="left:762px;top:1223px;width:1800px;height:2px;background:#e5e9ed;"></div>
<div class=r style="left:1031px;top:1215px;width:131px;height:9px;background:#0ab5e0;border-radius:9px 9px 0 0"></div>
<svg class=r style="left:794px;top:1253px" width="48" height="48" viewBox="0 0 48 48"><circle cx="24" cy="24" r="24" fill="#5b6b7c"/>
<g fill="none" stroke="#fff" stroke-width="2.5" stroke-linejoin="miter"><path d="M24 9.5L37.8 18.3V29.2L24 38.2L10.2 29.2V18.3Z"/><path d="M10.2 18.3L24 28.2L37.8 18.3M10.2 29.2L24 19.3L37.8 29.2M24 9.5V19.3M24 28.2V38.2"/></g></svg>
<div class=t style="left:857.51px;top:1255.53px;font-family:'Liberation Sans', sans-serif;font-size:33px;line-height:41.25px;font-weight:400;color:#5b6b7c;transform:scale(0.9438,1.0);">Copy to CodeSandBox</div>
<div class=t style="left:2272.90px;top:1255.93px;font-family:'Liberation Sans', sans-serif;font-size:33px;line-height:41.25px;font-weight:400;color:#5b6b7c;transform:scale(0.9349,1.0);">Reset</div>
<div class=r style="left:2402px;top:1241px;width:144px;height:72px;background:#0ab5e0;border-radius:36px"></div>
<div class=t style="left:2434.40px;top:1254.96px;font-family:'Liberation Sans', sans-serif;font-size:34px;line-height:42.5px;font-weight:400;color:#fff;transform:scale(0.9329,1.0);-webkit-text-stroke:0.5px #fff">Apply</div>
<div class=r style="left:762px;top:1329px;width:1800px;height:2px;background:#e5e9ed;"></div>
<div class=r style="left:782px;top:1359px;width:1698px;height:40px;background:#e7f1fd;"></div>
<div class=r style="left:2520px;top:1351px;width:22px;height:191px;background:#f8f8f8;"></div>
<div class=r style="left:2526px;top:1357px;width:12px;height:203px;background:#c1c1c1;border-radius:6px"></div>
<div class=t style="left:790px;top:1362.06px;font-family:'Liberation Mono',monospace;font-size:24px;line-height:39.5px;white-space:pre;transform-origin:0 26.14px;transform:scaleY(1.16);-webkit-text-stroke:0.25px currentColor"><span style='color:#770088'>import </span><span style='color:#0000ff'>React</span><span style='color:#333333'>, { </span><span style='color:#0000ff'>useEffect</span><span style='color:#333333'>, </span><span style='color:#0000ff'>useRef</span><span style='color:#333333'> } </span><span style='color:#770088'>from </span><span style='color:#aa1111'>'react'</span><span style='color:#333333'>;</span></div>
<div class=t style="left:790px;top:1441.06px;font-family:'Liberation Mono',monospace;font-size:24px;line-height:39.5px;white-space:pre;transform-origin:0 26.14px;transform:scaleY(1.16);-webkit-text-stroke:0.25px currentColor"><span style='color:#770088'>import </span><span style='color:#0000ff'>PivotGridDataSource</span><span style='color:#333333'> </span><span style='color:#770088'>from </span><span style='color:#aa1111'>'devextreme/ui/pivot_grid/data_source'</span><span style='color:#333333'>;</span></div>
<div class=t style="left:790px;top:1520.06px;font-family:'Liberation Mono',monospace;font-size:24px;line-height:39.5px;white-space:pre;transform-origin:0 26.14px;transform:scaleY(1.16);-webkit-text-stroke:0.25px currentColor"><span style='color:#770088'>import </span><span style='color:#0000ff'>Chart</span><span style='color:#333333'>, {</span></div>
<div class=r style="left:2644px;top:0px;width:30px;height:1542px;background:#f9f9f9;box-sizing:border-box;border-left:2px solid #e8e8e8"></div>
<div class=r style="left:2652px;top:403px;width:16px;height:397px;background:#c1c1c1;border-radius:8px"></div>
</body></html>
